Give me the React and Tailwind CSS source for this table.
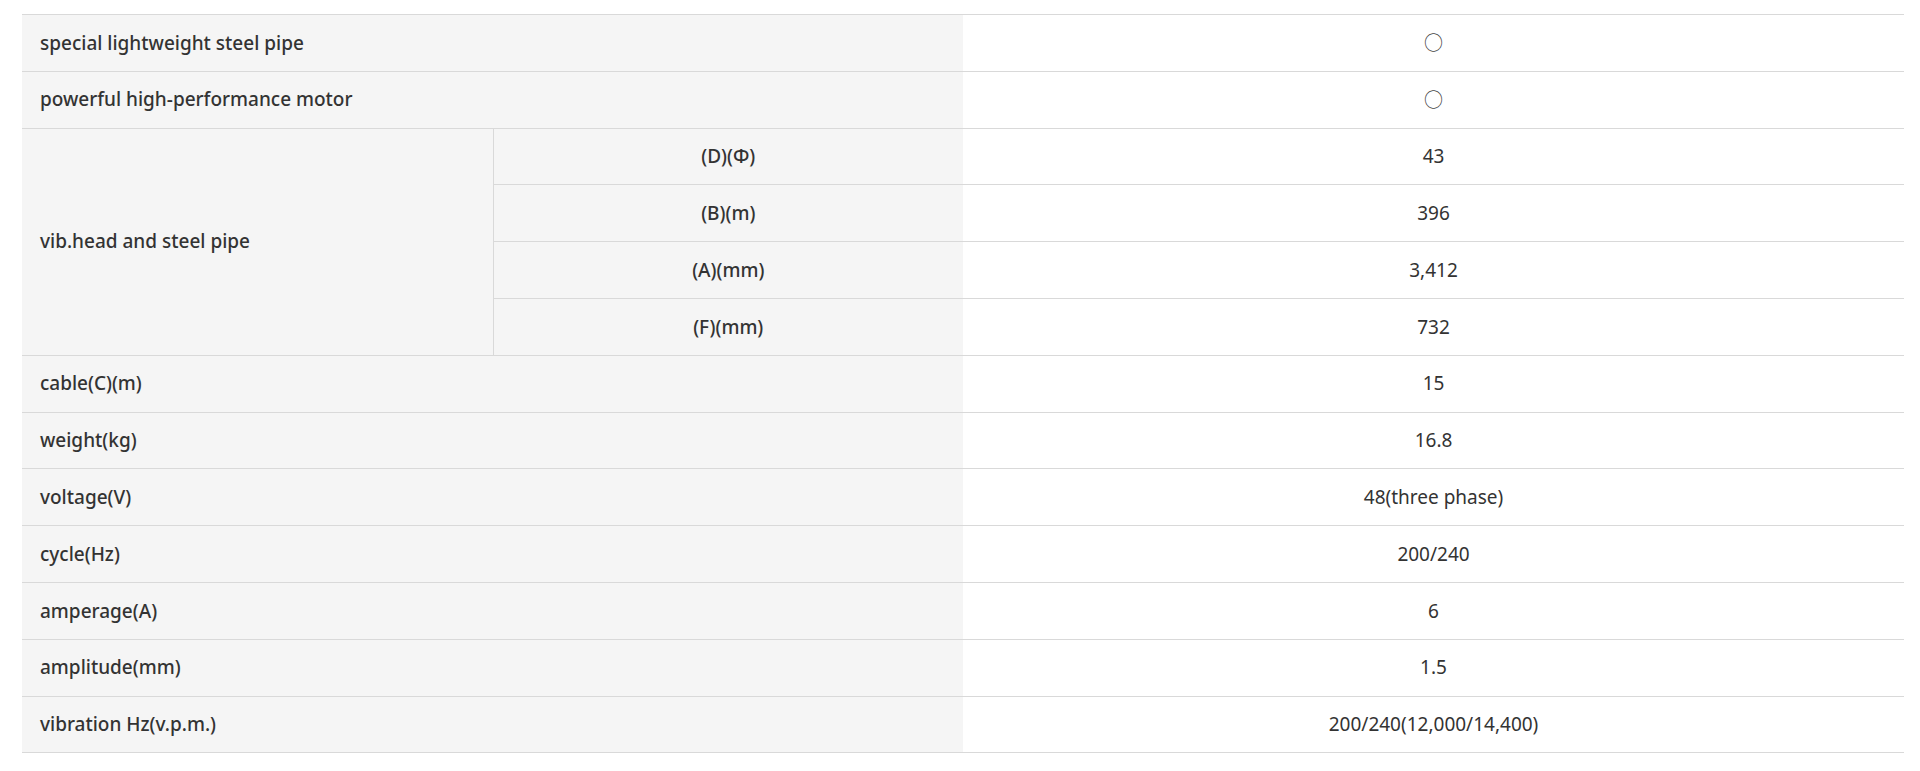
import React from 'react';

const rows = [
  { label: 'special lightweight steel pipe', value: '○', mark: true },
  { label: 'powerful high-performance motor', value: '○', mark: true },
];

const subRows = [
  { label: '(D)(Φ)', value: '43' },
  { label: '(B)(m)', value: '396' },
  { label: '(A)(mm)', value: '3,412' },
  { label: '(F)(mm)', value: '732' },
];

const moreRows = [
  { label: 'cable(C)(m)', value: '15' },
  { label: 'weight(kg)', value: '16.8' },
  { label: 'voltage(V)', value: '48(three phase)' },
  { label: 'cycle(Hz)', value: '200/240' },
  { label: 'amperage(A)', value: '6' },
  { label: 'amplitude(mm)', value: '1.5' },
  { label: 'vibration Hz(v.p.m.)', value: '200/240(12,000/14,400)' },
];

const th = 'bg-[#f5f5f5] border-b border-[#d9d9d9] text-[19px] font-medium text-[#333] text-left pl-[18px]';
const td = 'bg-white border-b border-[#d9d9d9] text-[19px] text-[#333] text-center';

const App = () => {
  return (
    <div className="bg-white min-h-[771px] pt-[14px] pl-[22px]" style={{ fontFamily: '"Noto Sans", "Open Sans", sans-serif' }}>
      <table className="w-[1882px] border-collapse border-t border-[#d9d9d9] table-fixed">
        <colgroup>
          <col className="w-[471px]" />
          <col className="w-[470px]" />
          <col className="w-[941px]" />
        </colgroup>
        <tbody>
          {rows.map((r) => (
            <tr key={r.label} className="h-[56.8px]">
              <th colSpan={2} className={th}>{r.label}</th>
              <td className={td}>
                <span className="font-['Noto_Sans_CJK_JP',sans-serif] text-[#444]">{r.value}</span>
              </td>
            </tr>
          ))}

          {/* vib.head group */}
          {subRows.map((r, i) => (
            <tr key={r.label} className="h-[56.8px]">
              {i === 0 && (
                <th rowSpan={4} className={th + ' border-r'}>vib.head and steel pipe</th>
              )}
              <th className="bg-[#f5f5f5] border-b border-[#d9d9d9] text-[19px] font-medium text-[#333] text-center">{r.label}</th>
              <td className={td}>{r.value}</td>
            </tr>
          ))}

          {moreRows.map((r) => (
            <tr key={r.label} className="h-[56.8px]">
              <th colSpan={2} className={th}>{r.label}</th>
              <td className={td}>{r.value}</td>
            </tr>
          ))}
        </tbody>
      </table>
    </div>
  );
};

export default App;
